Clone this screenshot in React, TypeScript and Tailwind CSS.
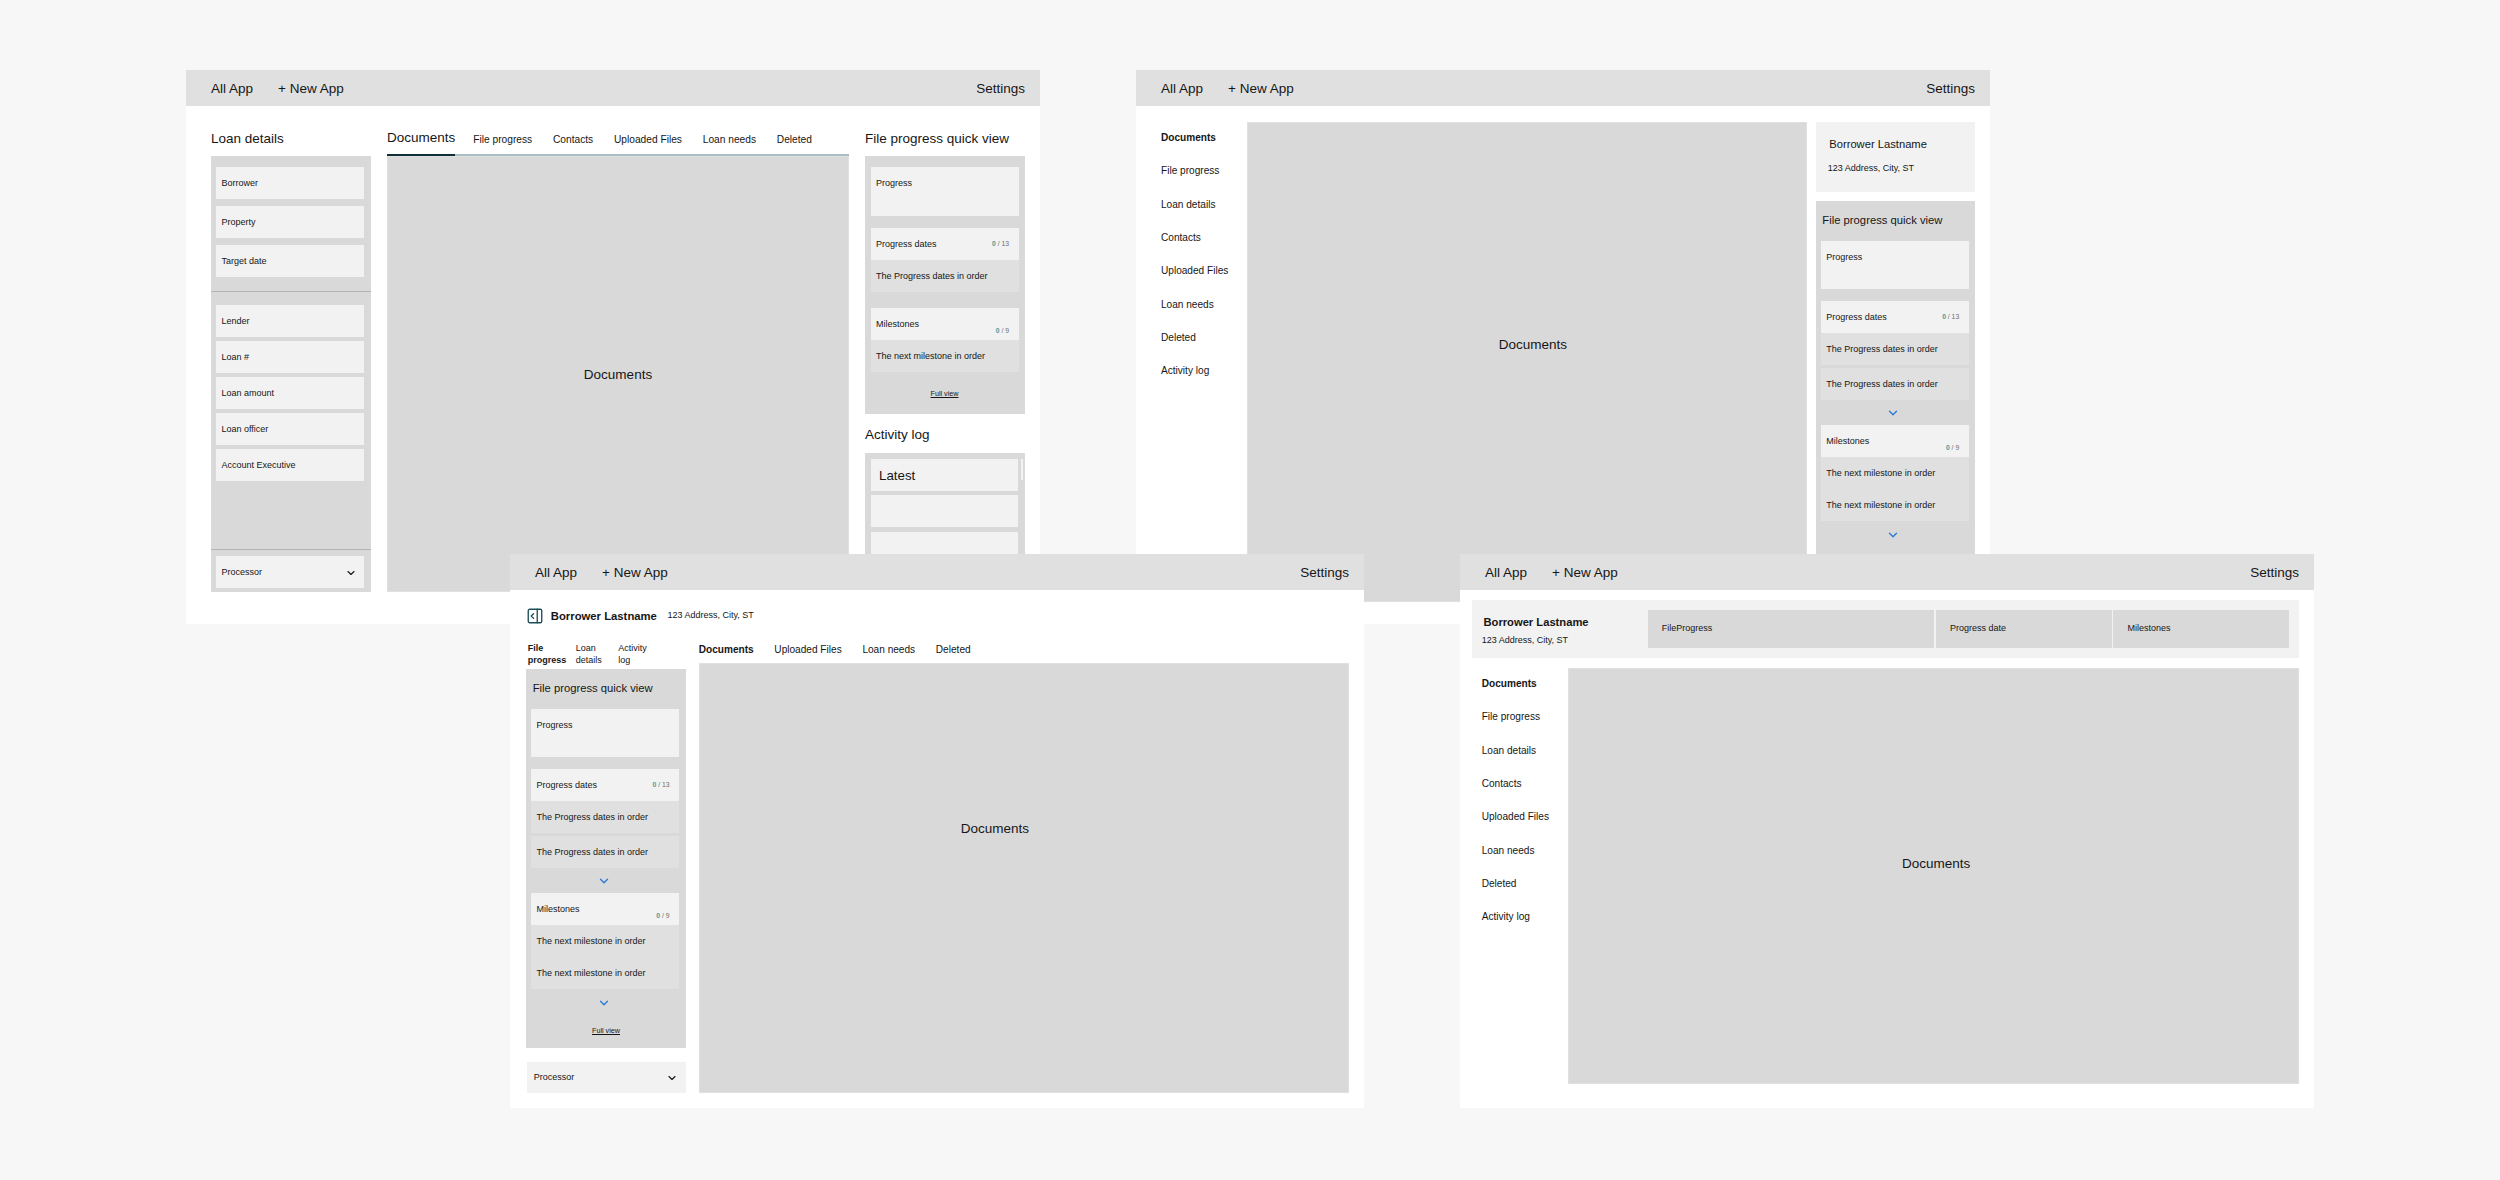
// Loan app layout explorations: four wireframe windows on a grey board.

import { ChevronDown, PanelRightOpen } from 'lucide-react';

const PANEL_TABS = ['File progress', 'Contacts', 'Uploaded Files', 'Loan needs', 'Deleted'];
const SIDE_NAV = ['File progress', 'Loan details', 'Contacts', 'Uploaded Files', 'Loan needs', 'Deleted', 'Activity log'];

function TopBar() {
  return (
    <div className="flex h-[36px] items-center bg-[#e0e0e0] pl-[25px] pr-[15px] pt-[2px] text-[13.5px]">
      <span>All App</span>
      <span className="ml-[25px]">+ New App</span>
      <span className="ml-auto">Settings</span>
    </div>
  );
}

function Field({ label, chevron }: { label: string; chevron?: boolean }) {
  return (
    <div className="flex h-[32px] items-center justify-between bg-[#f2f2f2] pl-[5.5px] pr-[7px] pt-[1px] text-[9px]">
      <span>{label}</span>
      {chevron && <ChevronDown size={12} strokeWidth={2.2} />}
    </div>
  );
}

function CountHead({ label, total, low }: { label: string; total: number; low?: boolean }) {
  return (
    <div className="flex h-[31.5px] items-center justify-between bg-[#f2f2f2] pl-[5.5px] pr-[9.5px] pt-[1px] text-[9px]">
      <span>{label}</span>
      <span className={`text-[6.8px] text-[#6f6f6f] ${low ? 'mt-[13px]' : ''}`}>
        <span className="font-bold text-[#4b9a9a]">0</span> / {total}
      </span>
    </div>
  );
}

function SubRow({ label, className = '' }: { label: string; className?: string }) {
  return <div className={`flex h-[32px] items-center bg-[#e0e0e0] pl-[5.5px] pt-[2px] text-[9px] ${className}`}>{label}</div>;
}

function BlueChevron({ className }: { className: string }) {
  return (
    <div className={`flex justify-center pr-[3px] text-[#2c7bd4] ${className}`}>
      <ChevronDown size={14} strokeWidth={2.4} />
    </div>
  );
}

function FullView({ className }: { className: string }) {
  return <div className={`text-center text-[7.2px] leading-[10px] underline ${className}`}>Full view</div>;
}

// Stacked quick view used by the two narrower layouts
function QuickViewPanel({ className, footer }: { className: string; footer?: boolean }) {
  return (
    <div className={`bg-[#d9d9d9] ${className}`}>
      <div className="flex h-[39.5px] items-center pl-[6.7px] text-[11.25px]">File progress quick view</div>
      <div className="ml-[5px] w-[148px]">
        <div className="h-[48.5px] bg-[#f2f2f2] pl-[5.5px] pt-[11px] text-[9px] leading-[11px]">Progress</div>
        <div className="mt-[12px]">
          <CountHead label="Progress dates" total={13} />
          <SubRow label="The Progress dates in order" />
          <SubRow label="The Progress dates in order" className="mt-[3.5px]" />
        </div>
        <BlueChevron className="h-[25px] items-center" />
        <CountHead label="Milestones" total={9} low />
        <SubRow label="The next milestone in order" />
        <SubRow label="The next milestone in order" />
        <BlueChevron className="h-[29px] items-center" />
        {footer && <FullView className="pl-[2px] pt-[8px]" />}
      </div>
    </div>
  );
}

function LayoutOne() {
  return (
    <div className="absolute left-[186px] top-[70px] h-[554px] w-[854px] overflow-hidden bg-white">
      <TopBar />
      <div className="flex pl-[25px]">
        {/* Loan details */}
        <div className="w-[160px]">
          <div className="h-[50px] pt-[23.5px] text-[13.5px] leading-[18px]">Loan details</div>
          <div className="flex h-[436px] flex-col bg-[#d9d9d9]">
            <div className="flex flex-col gap-[7px] border-b border-[#b4b4b4] pb-[14px] pl-[5px] pr-[7px] pt-[11px]">
              <Field label="Borrower" />
              <Field label="Property" />
              <Field label="Target date" />
            </div>
            <div className="flex flex-1 flex-col gap-[4px] pl-[5px] pr-[7px] pt-[13px]">
              <Field label="Lender" />
              <Field label="Loan #" />
              <Field label="Loan amount" />
              <Field label="Loan officer" />
              <Field label="Account Executive" />
            </div>
            <div className="h-[43px] border-t border-[#b4b4b4] pl-[5px] pr-[7px] pt-[6px]">
              <Field label="Processor" chevron />
            </div>
          </div>
        </div>

        {/* Documents */}
        <div className="ml-[16px] w-[462px]">
          <div className="flex h-[50px] items-end border-b-[2px] border-[#a9bfc3]">
            <div className="-mb-[2px] h-[34px] border-b-[2px] border-[#0f2e3a] pt-[7px] text-[13.5px] leading-[18px]">Documents</div>
            <div className="ml-[18px] flex h-[32px] gap-[20.8px] pt-[11px] text-[10.2px] leading-[14px]">
              {PANEL_TABS.map((t) => (
                <span key={t}>{t}</span>
              ))}
            </div>
          </div>
          <div className="flex h-[436px] items-center justify-center border border-[#e0e0e0] bg-[#d9d9d9] pt-[2px] text-[13.5px]">Documents</div>
        </div>

        {/* File progress and activity */}
        <div className="ml-[16px] w-[160px]">
          <div className="h-[50px] pt-[23.5px] text-[13.5px] leading-[18px]">File progress quick view</div>
          <div className="h-[257.5px] bg-[#d9d9d9] pl-[5.5px] pt-[11px]">
            <div className="w-[148px]">
              <div className="h-[49px] bg-[#f2f2f2] pl-[5.5px] pt-[11px] text-[9px] leading-[11px]">Progress</div>
              <div className="mt-[12px]">
                <CountHead label="Progress dates" total={13} />
                <SubRow label="The Progress dates in order" />
              </div>
              <div className="mt-[16.5px]">
                <CountHead label="Milestones" total={9} low />
                <SubRow label="The next milestone in order" />
              </div>
              <FullView className="mt-[17px]" />
            </div>
          </div>
          <div className="flex h-[39px] items-center pt-[4px] text-[13.5px]">Activity log</div>
          <div className="relative flex h-[140px] flex-col gap-[4.5px] bg-[#d9d9d9] pl-[6px] pt-[6px]">
            <div className="flex h-[32px] w-[147px] items-center bg-[#f2f2f2] pl-[8px] pt-[2px] text-[13.3px]">Latest</div>
            <div className="h-[32px] w-[147px] bg-[#f2f2f2]" />
            <div className="h-[32px] w-[147px] bg-[#f2f2f2]" />
            <div className="absolute right-[2px] top-[6px] h-[21px] w-[2px] bg-[#f2f2f2]" />
          </div>
        </div>
      </div>
    </div>
  );
}

function SideNav({ className }: { className: string }) {
  return (
    <div className={`text-[10.1px] ${className}`}>
      <div className="flex h-[33.33px] items-center font-bold">Documents</div>
      {SIDE_NAV.map((t) => (
        <div key={t} className="flex h-[33.33px] items-center">
          {t}
        </div>
      ))}
    </div>
  );
}

function LayoutTwo() {
  return (
    <div className="absolute left-[1136px] top-[70px] h-[554px] w-[854px] overflow-hidden bg-white">
      <TopBar />
      <div className="flex">
        <SideNav className="w-[110.7px] pl-[25px] pt-[15px]" />
        <div className="mt-[16px] flex h-[480px] w-[560.6px] items-center justify-center border border-[#e0e0e0] bg-[#d9d9d9] pb-[34px] pl-[12px] text-[13.5px]">
          Documents
        </div>
        <div className="ml-[8.4px] mt-[16px] w-[159.3px]">
          <div className="h-[70px] bg-[#f2f2f2] pl-[12px] pt-[13px]">
            <div className="ml-[1.6px] text-[11.2px] leading-[18px]">Borrower Lastname</div>
            <div className="mt-[8.5px] text-[9px] leading-[12px]">123 Address, City, ST</div>
          </div>
          <QuickViewPanel className="mt-[9px] h-[401px]" />
        </div>
      </div>
    </div>
  );
}

function LayoutThree() {
  return (
    <div className="absolute left-[510px] top-[554px] h-[554px] w-[854px] overflow-hidden bg-white">
      <TopBar />
      <div className="mt-[16px] flex h-[20px] items-center pl-[15.8px]">
        <PanelRightOpen size={18} strokeWidth={1.8} className="text-[#1d4e5a]" />
        <span className="ml-[7px] text-[11.3px] font-bold">Borrower Lastname</span>
        <span className="ml-[10.5px] text-[9px]">123 Address, City, ST</span>
      </div>
      <div className="mt-[16px] flex pl-[16px]">
        <div className="w-[160px]">
          <div className="flex h-[27px] pl-[1.7px] text-[9px] leading-[12px]">
            <span className="w-[48px] font-bold">File progress</span>
            <span className="w-[42.6px]">Loan details</span>
            <span className="w-[32px]">Activity log</span>
          </div>
          <QuickViewPanel className="h-[379px]" footer />
          <div className="ml-[1.3px] mt-[13.5px]">
            <div className="flex h-[31.5px] items-center justify-between bg-[#f2f2f2] pl-[6.5px] pr-[8px] pt-[1px] text-[9px]">
              <span>Processor</span>
              <ChevronDown size={12} strokeWidth={2.2} />
            </div>
          </div>
        </div>
        <div className="ml-[12.7px] w-[650.3px]">
          <div className="flex h-[21px] gap-[20.7px] pt-[1px] text-[10.1px] leading-[13px]">
            <span className="font-bold">Documents</span>
            <span>Uploaded Files</span>
            <span>Loan needs</span>
            <span>Deleted</span>
          </div>
          <div className="flex h-[430px] items-center justify-center border border-[#e0e0e0] bg-[#d9d9d9] pb-[97px] pr-[58px] text-[13.5px]">
            Documents
          </div>
        </div>
      </div>
    </div>
  );
}

function LayoutFour() {
  return (
    <div className="absolute left-[1460px] top-[554px] h-[554px] w-[854px] overflow-hidden bg-white">
      <TopBar />
      <div className="ml-[12px] mt-[10px] flex h-[57.7px] w-[827px] items-center bg-[#f2f2f2]">
        <div className="w-[175.8px] pl-[9.7px] pt-[3.5px]">
          <div className="ml-[1.8px] text-[11.2px] font-bold leading-[14px]">Borrower Lastname</div>
          <div className="mt-[4.5px] text-[9px] leading-[12px]">123 Address, City, ST</div>
        </div>
        <div className="flex h-[37.7px] gap-[1.5px] text-[9px]">
          <div className="flex w-[286.6px] items-center bg-[#d9d9d9] pl-[14px]">FileProgress</div>
          <div className="flex w-[176px] items-center bg-[#d9d9d9] pl-[14px]">Progress date</div>
          <div className="flex w-[175.6px] items-center bg-[#d9d9d9] pl-[14px]">Milestones</div>
        </div>
      </div>
      <div className="mt-[8.6px] flex">
        <SideNav className="w-[108.3px] pl-[21.7px] pt-[0.5px]" />
        <div className="mt-[1.7px] flex h-[416px] w-[730.7px] items-center justify-center border border-[#e0e0e0] bg-[#d9d9d9] pb-[23px] pl-[5px] text-[13.5px]">
          Documents
        </div>
      </div>
    </div>
  );
}

export default function App() {
  return (
    <div className="relative h-[1180px] w-[2500px] overflow-hidden bg-[#f7f7f7] font-['Liberation_Sans',sans-serif] text-[#161616]">
      <LayoutOne />
      <LayoutTwo />
      <LayoutThree />
      <LayoutFour />
    </div>
  );
}
